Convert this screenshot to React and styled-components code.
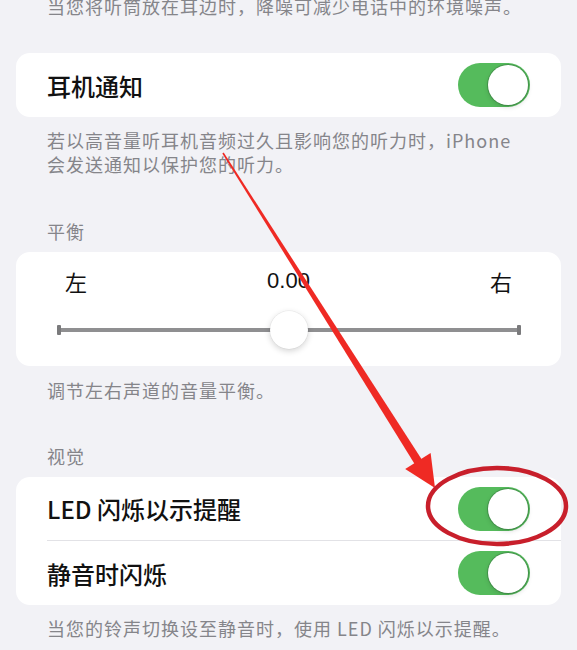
import React from 'react';
import styled, { createGlobalStyle } from 'styled-components';

const GlobalStyle = createGlobalStyle`
	body {
		margin: 0;
		background: #f2f2f6;
		font-family: 'Noto Sans CJK SC', 'Noto Sans', sans-serif;
		-webkit-font-smoothing: antialiased;
	}
`;

const Screen = styled.div`
	position: relative;
	width: 577px;
	height: 650px;
	overflow: hidden;
	background: #f2f2f6;
`;

const Content = styled.div`
	display: flex;
	flex-direction: column;
	padding: 0 16px;
`;

const Note = styled.p`
	margin: ${(p) => p.$top || 11}px 0 0;
	padding: 0 20px 0 31px;
	font-size: 18px;
	line-height: 24px;
	letter-spacing: 1px;
	color: #85858a;
`;

const GroupTitle = styled.div`
	margin-top: ${(p) => p.$top}px;
	padding-left: 31px;
	font-size: 18px;
	line-height: 22px;
	letter-spacing: 1px;
	color: #85858a;
`;

const Card = styled.div`
	margin-top: ${(p) => p.$top || 10}px;
	background: #fff;
	border-radius: 14px;
	overflow: hidden;
`;

const Row = styled.div`
	height: 64px;
	padding-left: 31px;
	display: flex;
`;

const RowBody = styled.div`
	flex: 1;
	display: flex;
	align-items: center;
	justify-content: space-between;
	padding-right: 31px;
	border-bottom: ${(p) => (p.$divider ? '1px solid #e2e2e6' : 'none')};
`;

const RowLabel = styled.span`
	font-size: 24px;
	font-weight: 500;
	color: #111;
`;

const Switch = styled.div`
	position: relative;
	width: 72px;
	height: 44px;
	border-radius: 22px;
	background: ${(p) => (p.$on ? '#55bb5c' : '#e5e5ea')};

	&::after {
		content: '';
		position: absolute;
		top: 2px;
		left: ${(p) => (p.$on ? '30px' : '2px')};
		width: 40px;
		height: 40px;
		border-radius: 50%;
		background: #fff;
		box-shadow: 0 0 0 1px rgba(40, 90, 50, 0.35), 0 2px 5px rgba(0, 0, 0, 0.15);
	}
`;

const BalanceBody = styled.div`
	padding: 14px 40px 16px 41px;
`;

const BalanceLabels = styled.div`
	display: flex;
	justify-content: space-between;
	align-items: center;
	padding: 0 9px 0 8px;
	height: 30px;
	font-size: 22px;
	color: #111;
`;

const Value = styled.span`
	font-family: 'Liberation Sans', Arial, sans-serif;
	font-size: 22px;
`;

const Slider = styled.div`
	position: relative;
	margin-top: 14px;
	height: 40px;
	display: flex;
	align-items: center;
`;

const Track = styled.div`
	flex: 1;
	height: 4px;
	background: #8f8f91;
	position: relative;

	&::before,
	&::after {
		content: '';
		position: absolute;
		top: -3px;
		width: 4px;
		height: 10px;
		background: #7a7a7c;
		border-radius: 1px;
	}
	&::before {
		left: 0;
	}
	&::after {
		right: 0;
	}
`;

const Thumb = styled.div`
	position: absolute;
	top: 1px;
	width: 38px;
	height: 38px;
	margin-left: -19px;
	border-radius: 50%;
	background: #fff;
	box-shadow: 0 2px 6px rgba(0, 0, 0, 0.18), 0 0 0 0.5px rgba(0, 0, 0, 0.06);
`;

const Markup = styled.svg`
	position: absolute;
	top: 0;
	left: 0;
	pointer-events: none;
`;

function ToggleRow({ label, on, divider }) {
	return (
		<Row>
			<RowBody $divider={divider}>
				<RowLabel>{label}</RowLabel>
				<Switch $on={on} />
			</RowBody>
		</Row>
	);
}

export default function App() {
	const balance = 0;
	// -1 .. 1 mapped to the track width
	const thumbPos = ((balance + 1) / 2) * 100;

	return (
		<Screen>
			<GlobalStyle />
			<Content>
				<Note $top={-6}>当您将听筒放在耳边时，降噪可减少电话中的环境噪声。</Note>

				<Card $top={35}>
					<ToggleRow label="耳机通知" on />
				</Card>
				<Note>
					若以高音量听耳机音频过久且影响您的听力时，iPhone
					<br />
					会发送通知以保护您的听力。
				</Note>

				<GroupTitle $top={44}>平衡</GroupTitle>
				<Card>
					<BalanceBody>
						<BalanceLabels>
							<span>左</span>
							<Value>{balance.toFixed(2)}</Value>
							<span>右</span>
						</BalanceLabels>
						<Slider>
							<Track />
							<Thumb style={{ left: `${thumbPos}%` }} />
						</Slider>
					</BalanceBody>
				</Card>
				<Note $top={12}>调节左右声道的音量平衡。</Note>

				<GroupTitle $top={43}>视觉</GroupTitle>
				<Card>
					<ToggleRow label="LED 闪烁以示提醒" on divider />
					<ToggleRow label="静音时闪烁" on />
				</Card>
				<Note>当您的铃声切换设至静音时，使用 LED 闪烁以示提醒。</Note>
			</Content>

			{/* red arrow + circle drawn on top of the screenshot */}
			<Markup width="577" height="650" viewBox="0 0 577 650">
				<polygon
					points="223.7,152.6 222.3,153.4 415.4,465.2 422.6,460.8"
					fill="#ef2a24"
				/>
				<polygon points="435,488 430.6,453 405.2,469" fill="#ef2a24" />
				<ellipse
					cx="497"
					cy="506"
					rx="69"
					ry="38"
					fill="none"
					stroke="#c81f2b"
					strokeWidth="4.5"
				/>
			</Markup>
		</Screen>
	);
}
